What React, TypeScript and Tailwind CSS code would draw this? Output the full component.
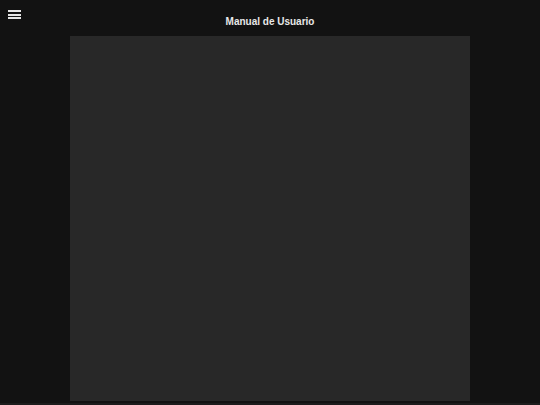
import React from "react";

export default function App() {
  return (
    <div
      className="w-[540px] h-[405px] bg-[#121212] flex flex-col overflow-hidden"
      style={{ fontFamily: '"Liberation Sans", Arial, sans-serif' }}
    >
      <header className="relative h-[36px] shrink-0 flex items-center justify-center pt-[8px]">
        <button className="absolute left-[8px] top-[10px] w-[13px] h-[9px] flex flex-col justify-between">
          <span className="block h-[2px] w-full bg-[#e6e6e6]" />
          <span className="block h-[2px] w-full bg-[#e6e6e6]" />
          <span className="block h-[2px] w-full bg-[#e6e6e6]" />
        </button>
        <h1 className="text-[10px] font-bold text-[#e8e8e8] leading-none">Manual de Usuario</h1>
      </header>
      <div className="flex justify-center">
        <div className="w-[400px] h-[365px] bg-[#282828]" />
      </div>
      <div className="mt-[2px] h-[2px] bg-[#1c1c1c]" />
    </div>
  );
}
